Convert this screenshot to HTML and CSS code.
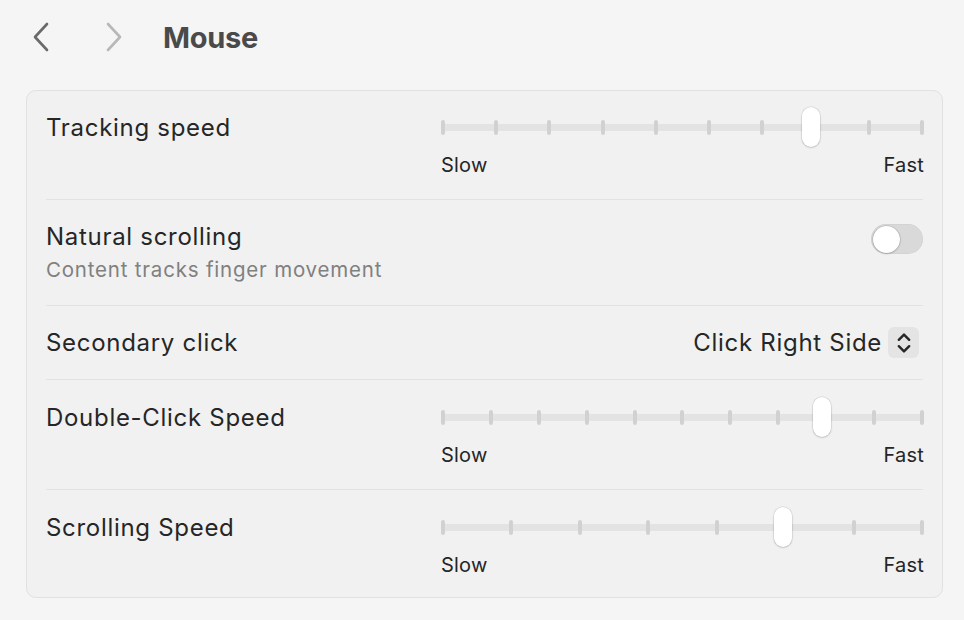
FILE: index.html
```html
<!DOCTYPE html>
<html>
<head>
<meta charset="utf-8">
<link rel="stylesheet" href="styles.css">
</head>
<body>
<header class="toolbar">
  <button class="nav back" aria-label="Back">
    <svg width="18" height="30" viewBox="0 0 18 30"><path d="M15 2 L3 15 L15 28" fill="none" stroke="currentColor" stroke-width="2.6" stroke-linecap="round" stroke-linejoin="round"/></svg>
  </button>
  <button class="nav fwd" aria-label="Forward">
    <svg width="18" height="30" viewBox="0 0 18 30"><path d="M3 2 L15 15 L3 28" fill="none" stroke="currentColor" stroke-width="2.6" stroke-linecap="round" stroke-linejoin="round"/></svg>
  </button>
  <h1 class="title">Mouse</h1>
</header>

<section class="card">
  <div class="row slider-row first">
    <div class="label">Tracking speed</div>
    <div class="slider">
      <div class="track">
        <div class="ticks"><i></i><i></i><i></i><i></i><i></i><i></i><i></i><i></i><i></i><i></i></div>
        <div class="thumb" style="left: 76.7%"></div>
      </div>
      <div class="ends"><span>Slow</span><span>Fast</span></div>
    </div>
  </div>

  <div class="row toggle-row">
    <div class="text">
      <div class="label-plain">Natural scrolling</div>
      <div class="sub">Content tracks finger movement</div>
    </div>
    <div class="toggle"><div class="knob"></div></div>
  </div>

  <div class="row popup-row">
    <div class="label-plain">Secondary click</div>
    <div class="popup">
      <span>Click Right Side</span>
      <span class="stepper">
        <svg width="16" height="26" viewBox="0 0 16 26"><path d="M2.8 9.8 L8 4.6 L13.2 9.8 M2.8 16.2 L8 21.4 L13.2 16.2" fill="none" stroke="#262626" stroke-width="2.4" stroke-linecap="round" stroke-linejoin="round"/></svg>
      </span>
    </div>
  </div>

  <div class="row slider-row">
    <div class="label">Double-Click Speed</div>
    <div class="slider">
      <div class="track">
        <div class="ticks"><i></i><i></i><i></i><i></i><i></i><i></i><i></i><i></i><i></i><i></i><i></i></div>
        <div class="thumb" style="left: 78.9%"></div>
      </div>
      <div class="ends"><span>Slow</span><span>Fast</span></div>
    </div>
  </div>

  <div class="row slider-row last">
    <div class="label">Scrolling Speed</div>
    <div class="slider">
      <div class="track">
        <div class="ticks"><i></i><i></i><i></i><i></i><i></i><i></i><i></i><i></i></div>
        <div class="thumb" style="left: 70.8%"></div>
      </div>
      <div class="ends"><span>Slow</span><span>Fast</span></div>
    </div>
  </div>
</section>
</body>
</html>
```

FILE: styles.css
```css
* { box-sizing: border-box; }

html, body {
  margin: 0;
  padding: 0;
  background: #f5f5f5;
  font-family: Inter, "Noto Sans", "Liberation Sans", sans-serif;
  color: #262626;
}

.toolbar {
  display: flex;
  align-items: center;
  padding: 22px 0 0 32px;
  height: 52px;
}

.nav {
  border: 0;
  background: none;
  padding: 0;
  width: 18px;
  height: 30px;
  display: flex;
}
.nav.back { color: #6a6a6a; }
.nav.fwd { color: #b8b8b8; margin-left: 55px; }

.title {
  margin: 0 0 0 40px;
  font-size: 29px;
  font-weight: 700;
  color: #4a4a4a;
  letter-spacing: -0.3px;
}

.card {
  margin: 38px 21px 0 26px;
  background: #f1f1f1;
  border: 1px solid #e1e1e1;
  border-radius: 10px;
  padding: 0 19px;
}

.row {
  display: flex;
  justify-content: space-between;
  border-top: 1px solid #e2e2e2;
}
.row.first { border-top: 0; }

.label {
  font-size: 24px;
  line-height: 40px;
  letter-spacing: 0.7px;
  padding-top: 1px;
}
.label-plain {
  font-size: 24px;
  line-height: 30px;
  letter-spacing: 0.7px;
}

.slider-row {
  padding: 17px 0 22px;
}
.slider-row.first { padding-top: 16px; }
.slider-row.last { padding-bottom: 20px; }

.slider {
  width: 483px;
  margin-right: -1px;
}
.track {
  position: relative;
  height: 40px;
}
.track::before {
  content: "";
  position: absolute;
  left: 1px;
  right: 1px;
  top: 17px;
  height: 7px;
  border-radius: 3px;
  background: #e3e3e3;
}
.ticks {
  position: absolute;
  left: 0;
  right: 0;
  top: 13px;
  height: 15px;
  display: flex;
  justify-content: space-between;
}
.ticks i {
  display: block;
  width: 4px;
  height: 15px;
  border-radius: 2px;
  background: #d1d1d1;
}
.thumb {
  position: absolute;
  top: 0;
  width: 18px;
  height: 40px;
  margin-left: -9px;
  border-radius: 9px;
  background: #fff;
  box-shadow: 0 0.5px 2px rgba(0,0,0,0.25), 0 0 0 0.5px rgba(0,0,0,0.08);
}
.ends {
  display: flex;
  justify-content: space-between;
  font-size: 20px;
  line-height: 24px;
  margin-top: 6px;
  letter-spacing: 0.2px;
}

.toggle-row {
  padding: 22px 0 19px;
}
.sub {
  font-size: 20.5px;
  line-height: 32px;
  color: #808080;
  margin-top: 2px;
  letter-spacing: 0.8px;
}
.toggle {
  width: 52px;
  height: 30px;
  border-radius: 15px;
  background: #d9d9d9;
  margin-top: 2px;
  padding: 1.5px;
  box-shadow: inset 0 0 0 0.5px rgba(0,0,0,0.05);
}
.knob {
  width: 27px;
  height: 27px;
  border-radius: 50%;
  background: #fff;
  box-shadow: 0 0.5px 2px rgba(0,0,0,0.3), 0 0 0 0.5px rgba(0,0,0,0.1);
}

.popup-row {
  padding: 21px 0 21px;
  align-items: center;
}
.popup {
  display: flex;
  align-items: center;
  font-size: 24px;
  line-height: 30px;
  letter-spacing: 0.7px;
  margin-right: 4px;
}
.stepper {
  margin-left: 6px;
  width: 31px;
  height: 31px;
  border-radius: 6px;
  background: #e4e4e4;
  display: flex;
  align-items: center;
  justify-content: center;
}
```
